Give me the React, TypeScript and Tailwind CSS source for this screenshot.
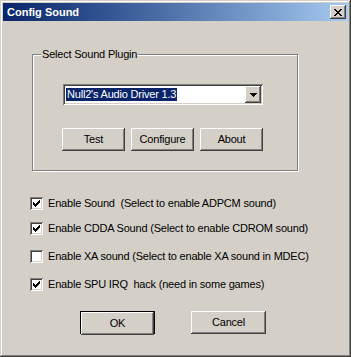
import React from "react"

const raised = "shadow-[inset_-1px_-1px_#404040,inset_1px_1px_#ffffff,inset_-2px_-2px_#808080,inset_2px_2px_#d4d0c8]"
const sunken = "shadow-[inset_1px_1px_#808080,inset_-1px_-1px_#ffffff,inset_2px_2px_#404040,inset_-2px_-2px_#d4d0c8]"

const Check = ({ checked }: { checked: boolean }) => (
    <div className={`w-[13px] h-[13px] bg-white shrink-0 flex items-center justify-center ${sunken}`}>
        {checked && (
            <svg width="7" height="7" viewBox="0 0 7 7" shapeRendering="crispEdges">
                <path d="M6 0h1v1h-1zM5 1h1v1h-1zM4 2h1v1h-1zM3 3h1v1h-1zM2 4h1v1h-1zM1 3h1v1h-1zM0 2h1v1h-1z M6 1h1v1h-1zM5 2h1v1h-1zM4 3h1v1h-1zM3 4h1v1h-1zM2 5h1v1h-1zM1 4h1v1h-1zM0 3h1v1h-1z M6 2h1v1h-1zM5 3h1v1h-1zM4 4h1v1h-1zM3 5h1v1h-1zM2 6h1v1h-1zM1 5h1v1h-1zM0 4h1v1h-1z" fill="#000" />
            </svg>
        )}
    </div>
)

const Button = ({ label, className = "" }: { label: string; className?: string }) => (
    <div className={`h-[23px] flex items-center justify-center bg-[#d4d0c8] ${raised} ${className}`}>
        {label}
    </div>
)

const options = [
    { checked: true, label: "Enable Sound  (Select to enable ADPCM sound)", mt: "mt-[26px]" },
    { checked: true, label: "Enable CDDA Sound (Select to enable CDROM sound)", mt: "mt-[12px]" },
    { checked: false, label: "Enable XA sound (Select to enable XA sound in MDEC)", mt: "mt-[15px]" },
    { checked: true, label: "Enable SPU IRQ  hack (need in some games)", mt: "mt-[15px]" },
]

export default function App() {
    return (
        <div
            className="w-[351px] h-[357px] bg-[#d4d0c8] p-[3px] flex flex-col text-[11px] tracking-[-0.2px] text-black shadow-[inset_-1px_-1px_#404040,inset_1px_1px_#d4d0c8,inset_-2px_-2px_#808080,inset_2px_2px_#ffffff]"
            style={{ fontFamily: '"Liberation Sans", Arial, sans-serif' }}
        >
            {/* Title bar */}
            <div className="h-[18px] flex items-center justify-between bg-gradient-to-r from-[#0a246a] to-[#a6caf0] pl-[4px] pr-[2px]">
                <span className="text-white font-bold text-[11px] tracking-normal whitespace-pre">Config Sound</span>
                <div className={`w-[16px] h-[14px] flex items-center justify-center bg-[#d4d0c8] ${raised}`}>
                    <svg width="8" height="7" viewBox="0 0 8 7" shapeRendering="crispEdges">
                        <path d="M0 0h2v1h-2zM6 0h2v1h-2zM1 1h2v1h-2zM5 1h2v1h-2zM2 2h4v1h-4zM3 3h2v1h-2zM2 4h4v1h-4zM1 5h2v1h-2zM5 5h2v1h-2zM0 6h2v1h-2zM6 6h2v1h-2z" fill="#000" />
                    </svg>
                </div>
            </div>

            {/* Group box */}
            <div className="relative ml-[29px] mt-[33px] w-[266px] border border-[#808080] shadow-[1px_1px_0_#ffffff,inset_1px_1px_0_#ffffff] pt-[29px] pb-[19px]">
                <span className="absolute left-[8px] top-[-7px] bg-[#d4d0c8] px-[1px] leading-[13px]">Select Sound Plugin</span>
                <div className={`ml-[30px] w-[200px] h-[21px] bg-white flex items-center p-[2px] ${sunken}`}>
                    <div className="flex-1 h-full flex items-center pl-[1px]">
                        <span className="bg-[#0a246a] text-white leading-[13px] px-[1px]">Null2's Audio Driver 1.3</span>
                    </div>
                    <div className={`w-[16px] h-[17px] bg-[#d4d0c8] flex items-center justify-center ${raised}`}>
                        <svg width="7" height="4" viewBox="0 0 7 4" shapeRendering="crispEdges">
                            <path d="M0 0h7v1h-7zM1 1h5v1h-5zM2 2h3v1h-3zM3 3h1v1h-1z" fill="#000" />
                        </svg>
                    </div>
                </div>
                <div className="flex gap-[6px] ml-[29px] mt-[23px]">
                    <Button label="Test" className="w-[63px]" />
                    <Button label="Configure" className="w-[63px]" />
                    <Button label="About" className="w-[63px]" />
                </div>
            </div>

            {/* Options */}
            {options.map((o) => (
                <div key={o.label} className={`flex items-center h-[13px] ml-[27px] ${o.mt}`}>
                    <Check checked={o.checked} />
                    <span className="ml-[5px] whitespace-pre leading-[13px]">{o.label}</span>
                </div>
            ))}

            {/* OK / Cancel */}
            <div className="flex mt-[20px] ml-[77px] gap-[36px]">
                <div className="w-[75px] h-[23px] border border-black">
                    <Button label="OK" className="w-full h-[21px]" />
                </div>
                <Button label="Cancel" className="w-[75px]" />
            </div>
        </div>
    )
}
